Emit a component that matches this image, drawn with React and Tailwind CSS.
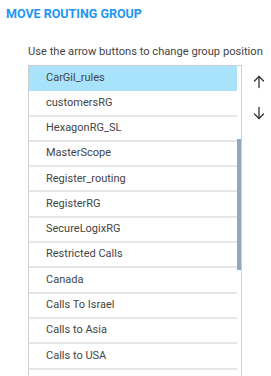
import React from 'react';

const groups = [
  'CarGil_rules',
  'customersRG',
  'HexagonRG_SL',
  'MasterScope',
  'Register_routing',
  'RegisterRG',
  'SecureLogixRG',
  'Restricted Calls',
  'Canada',
  'Calls To Israel',
  'Calls to Asia',
  'Calls to USA',
  '',
];

function Arrow({ down }) {
  return (
    <svg width="12" height="14" viewBox="0 0 12 14" fill="none" stroke="#333" strokeWidth="1.3" strokeLinecap="round" strokeLinejoin="round">
      {down ? (
        <>
          <path d="M6 1.5v11" />
          <path d="M1.5 8l4.5 4.5L10.5 8" />
        </>
      ) : (
        <>
          <path d="M6 12.5v-11" />
          <path d="M1.5 6L6 1.5 10.5 6" />
        </>
      )}
    </svg>
  );
}

export default function App() {
  const selected = 0;
  return (
    <div className="h-[376px] overflow-hidden bg-white font-['Roboto',sans-serif]">
      <div className="pl-[6px] pt-[6px] text-[12.5px] font-bold leading-[15px] text-[#2196f3]">
        MOVE ROUTING GROUP
      </div>
      <div className="ml-[28px] mt-[24px]">
        <div className="text-[11.15px] leading-[14px] text-[#444]">
          Use the arrow buttons to change group position
        </div>
        <div className="mt-[6px] flex">
          <div className="flex w-[214px] border border-b-0 border-[#cfcfcf]">
            <div className="flex-1">
              {groups.map((g, i) => (
                <div
                  key={i}
                  className={`flex h-[25.3px] items-center pl-[17px] text-[11px] text-[#444] ${
                    i === selected ? 'bg-[#a9e3fb]' : 'border-b-2 border-[#e6e6e6]'
                  }`}
                >
                  {g}
                </div>
              ))}
            </div>
            <div className="w-[4px]">
              <div className="mt-[73px] h-[131px] bg-[#8fa8bd]" />
            </div>
          </div>
          <div className="ml-[11px] flex flex-col items-center gap-[17px] pt-[10px]">
            <Arrow />
            <Arrow down />
          </div>
        </div>
      </div>
    </div>
  );
}
